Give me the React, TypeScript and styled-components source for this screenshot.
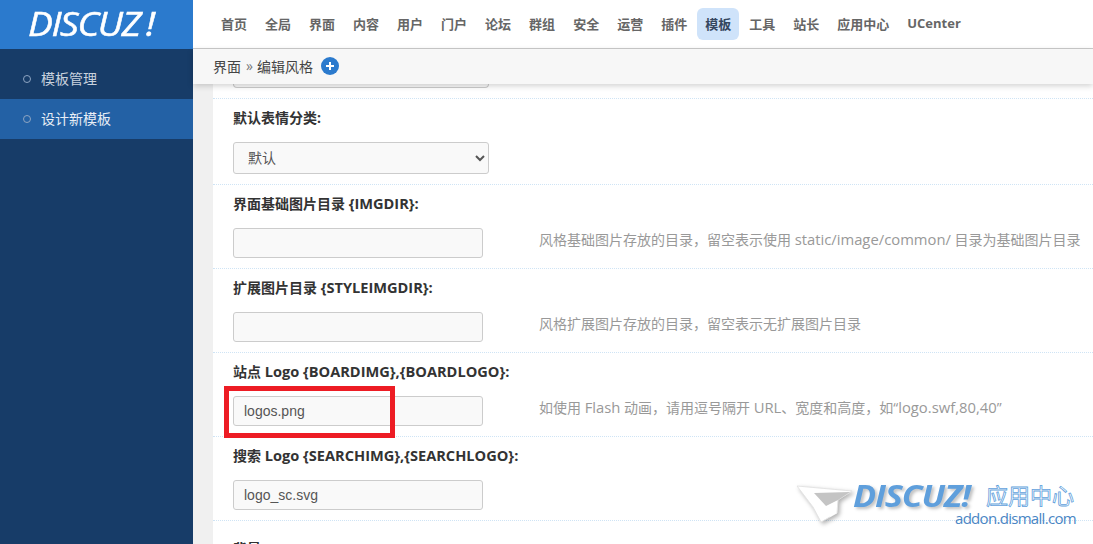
import React from "react";
import styled, { createGlobalStyle } from "styled-components";

const Global = createGlobalStyle`
  html, body { margin: 0; padding: 0; height: 100%; overflow: hidden; background: #fff; }
  #root { height: 100%; }
  * { box-sizing: border-box; }
`;

const FONT = `"Open Sans", "Noto Sans CJK SC", sans-serif`;

const Page = styled.div`
  width: 1093px;
  height: 544px;
  display: grid;
  grid-template-columns: 193px 1fr;
  overflow: hidden;
  position: relative;
  font-family: ${FONT};
  background: #f0f0f0;
`;

const Sidebar = styled.aside`
  background: #173c68;
  display: flex;
  flex-direction: column;
`;

const Brand = styled.div`
  height: 49px;
  background: #2b7acd;
  display: flex;
  align-items: center;
  padding-left: 28px;
  padding-bottom: 1px;
`;

const BrandText = styled.span`
  font-family: "Open Sans", sans-serif;
  font-style: italic;
  font-weight: 400;
  font-size: 32px;
  letter-spacing: -1.2px;
  line-height: 1;
  color: #fff;
  white-space: nowrap;
  -webkit-text-stroke: 0.5px #fff;
  transform: scaleX(1.16);
  transform-origin: left center;
`;

const BrandMark = styled.span`
  margin-left: 5px;
`;

const SideMenu = styled.nav`
  margin-top: 10px;
  display: flex;
  flex-direction: column;
`;

const SideItem = styled.a<{ $active?: boolean }>`
  height: 40px;
  display: flex;
  align-items: center;
  gap: 10px;
  padding: 0 0 1px 23px;
  font-size: 14px;
  line-height: 20px;
  color: ${(p) => (p.$active ? "#e8eef6" : "#c9d2de")};
  background: ${(p) => (p.$active ? "#2361a5" : "transparent")};
`;

const Bullet = styled.i`
  width: 8px;
  height: 8px;
  border-radius: 50%;
  border: 1px solid #8ea5c2;
`;

const Main = styled.div`
  display: flex;
  flex-direction: column;
  min-width: 0;
`;

const TopNav = styled.nav`
  height: 49px;
  background: #fff;
  border-bottom: 1px solid #ccc;
  display: flex;
  align-items: flex-start;
  padding: 8px 0 0 19px;
`;

const NavItem = styled.a<{ $active?: boolean }>`
  height: 32px;
  margin: 0 1px;
  padding: 0 8px 2px;
  border-radius: 6px;
  display: flex;
  align-items: center;
  font-size: 13px;
  font-weight: 700;
  color: ${(p) => (p.$active ? "#35475f" : "#666")};
  background: ${(p) => (p.$active ? "#cfe3fa" : "transparent")};
`;

const Crumbs = styled.div`
  height: 35px;
  background: #f7f7f7;
  box-shadow: 0 2px 6px rgba(0, 0, 0, 0.18);
  display: flex;
  align-items: center;
  padding: 0 0 2px 20px;
  font-size: 14px;
  color: #444;
  position: relative;
  z-index: 2;
`;

const Sep = styled.span`
  color: #777;
  margin: 0 4px 0 5px;
`;

const AddBtn = styled.span`
  width: 18px;
  height: 18px;
  margin-left: 8px;
  border-radius: 50%;
  background: #2b7acd;
  display: flex;
  align-items: center;
  justify-content: center;
`;

const Content = styled.main`
  flex: 1;
  margin-left: 20px;
  background: #fff;
  padding-left: 20px;
  overflow: hidden;
  display: flex;
  flex-direction: column;
`;

const Clipped = styled.div`
  height: 15px;
  flex: none;
  margin-left: -20px;
  padding-left: 20px;
  border-bottom: 1px dotted #cfe4f5;
`;

const ClippedField = styled.div`
  width: 256px;
  height: 4px;
  border: 1px solid #ccc;
  border-top: 0;
  border-radius: 0 0 4px 4px;
  background: #f9f9f9;
`;

const Row = styled.section<{ $tall?: boolean; $last?: boolean }>`
  flex: none;
  height: ${(p) => (p.$tall ? 86 : 84)}px;
  margin-left: -20px;
  padding: ${(p) => (p.$last ? 18 : 9)}px 0 0 20px;
  border-bottom: ${(p) => (p.$last ? "0" : "1px dotted #cfe4f5")};
  position: relative;
`;

const Label = styled.div`
  height: 20px;
  line-height: 20px;
  font-size: 14px;
  font-weight: 700;
  color: #333;
  white-space: nowrap;
`;

const Latin = styled.span`
  font-size: 14.6px;
  line-height: 1;
`;

const HintLatin = styled.span`
  font-size: 14.8px;
  line-height: 1;
`;

const FieldLine = styled.div`
  display: flex;
  align-items: center;
  margin-top: 14px;
`;

const Input = styled.input`
  width: 250px;
  height: 30px;
  padding: 0 10px;
  border: 1px solid #ccc;
  border-radius: 3px;
  background: #f9f9f9;
  font-family: "Liberation Sans", sans-serif;
  font-size: 14px;
  color: #555;
  outline: none;
`;

const Select = styled.select`
  width: 256px;
  height: 32px;
  padding: 0 10px 2px;
  border: 1px solid #ccc;
  border-radius: 3px;
  background: #f9f9f9;
  font-family: ${FONT};
  font-size: 14px;
  color: #555;
`;

const Hint = styled.span`
  margin: 0 0 6px 56px;
  font-size: 14px;
  line-height: 20px;
  color: #999;
  white-space: nowrap;
`;

const Highlight = styled.div`
  position: absolute;
  left: 11px;
  top: 33px;
  width: 171px;
  height: 52px;
  border: 5px solid #ed1c24;
  pointer-events: none;
`;

const Watermark = styled.div`
  position: absolute;
  left: 796px;
  top: 482px;
  width: 285px;
  height: 46px;
  pointer-events: none;
  z-index: 3;
`;

const WmPlane = styled.svg`
  position: absolute;
  left: 0;
  top: 0;
  filter: drop-shadow(2px 2px 2px rgba(0, 0, 0, 0.3));
`;

const WmBrand = styled.span`
  position: absolute;
  left: 57px;
  top: 1px;
  font-family: "Open Sans", sans-serif;
  font-style: italic;
  font-weight: 700;
  font-size: 30px;
  line-height: 26px;
  letter-spacing: -1px;
  color: #5f9fdc;
  text-shadow: 2px 2px 3px rgba(0, 0, 0, 0.25);
  white-space: nowrap;
  transform: scaleX(1.14);
  transform-origin: left center;
`;

const WmCn = styled.span`
  position: absolute;
  left: 190px;
  top: 1px;
  font-size: 22px;
  line-height: 24px;
  color: #fff;
  -webkit-text-stroke: 0.8px #5f9fdc;
  white-space: nowrap;
`;

const WmUrl = styled.span`
  position: absolute;
  left: 159px;
  top: 27px;
  font-size: 15px;
  line-height: 18px;
  letter-spacing: -0.7px;
  color: #4a86c4;
  white-space: nowrap;
`;

const nav = ["首页", "全局", "界面", "内容", "用户", "门户", "论坛", "群组", "安全", "运营", "插件", "模板", "工具", "站长", "应用中心", "UCenter"];

export default function App() {
  return (
    <Page>
      <Global />
      <Sidebar>
        <Brand>
          <BrandText>DISCUZ<BrandMark>!</BrandMark></BrandText>
        </Brand>
        <SideMenu>
          <SideItem><Bullet />模板管理</SideItem>
          <SideItem $active><Bullet />设计新模板</SideItem>
        </SideMenu>
      </Sidebar>
      <Main>
        <TopNav>
          {nav.map((n) => (
            <NavItem key={n} $active={n === "模板"}>{n}</NavItem>
          ))}
        </TopNav>
        <Crumbs>
          界面<Sep>»</Sep>编辑风格
          <AddBtn>
            <svg width="10" height="10" viewBox="0 0 10 10">
              <path d="M5 1v8M1 5h8" stroke="#fff" strokeWidth="2" />
            </svg>
          </AddBtn>
        </Crumbs>
        <Content>
          <Clipped><ClippedField /></Clipped>
          <Row $tall>
            <Label>默认表情分类:</Label>
            <FieldLine>
              <Select defaultValue="默认"><option>默认</option></Select>
            </FieldLine>
          </Row>
          <Row>
            <Label>界面基础图片目录 <Latin>{"{IMGDIR}"}:</Latin></Label>
            <FieldLine>
              <Input readOnly value="" />
              <Hint>风格基础图片存放的目录，留空表示使用 <HintLatin>static/image/common/</HintLatin> 目录为基础图片目录</Hint>
            </FieldLine>
          </Row>
          <Row>
            <Label>扩展图片目录 <Latin>{"{STYLEIMGDIR}"}:</Latin></Label>
            <FieldLine>
              <Input readOnly value="" />
              <Hint>风格扩展图片存放的目录，留空表示无扩展图片目录</Hint>
            </FieldLine>
          </Row>
          <Row>
            <Label>站点 <Latin>Logo {"{BOARDIMG},{BOARDLOGO}"}:</Latin></Label>
            <FieldLine>
              <Input readOnly value="logos.png" />
              <Hint>如使用 <HintLatin>Flash</HintLatin> 动画，请用逗号隔开 <HintLatin>URL</HintLatin>、宽度和高度，如“<HintLatin>logo.swf,80,40</HintLatin>”</Hint>
            </FieldLine>
            <Highlight />
          </Row>
          <Row>
            <Label>搜索 <Latin>Logo {"{SEARCHIMG},{SEARCHLOGO}"}:</Latin></Label>
            <FieldLine>
              <Input readOnly value="logo_sc.svg" />
            </FieldLine>
          </Row>
          <Row $last>
            <Label>背景</Label>
          </Row>
        </Content>
      </Main>
      <Watermark>
        <WmPlane width="58" height="44" viewBox="0 0 58 44">
          <path d="M1 4 L56 9 L42 18 L41 31 L25 40 L17 25 Z" fill="#fff" stroke="#e4e4e4" strokeWidth="1" />
          <path d="M18 11 L54 10 L42 18 L30 24 Z" fill="#c4c4c4" />
          <path d="M30 24 L41 31 L34 35 Z" fill="#fff" />
        </WmPlane>
        <WmBrand>DISCUZ!</WmBrand>
        <WmCn>应用中心</WmCn>
        <WmUrl>addon.dismall.com</WmUrl>
      </Watermark>
    </Page>
  );
}
